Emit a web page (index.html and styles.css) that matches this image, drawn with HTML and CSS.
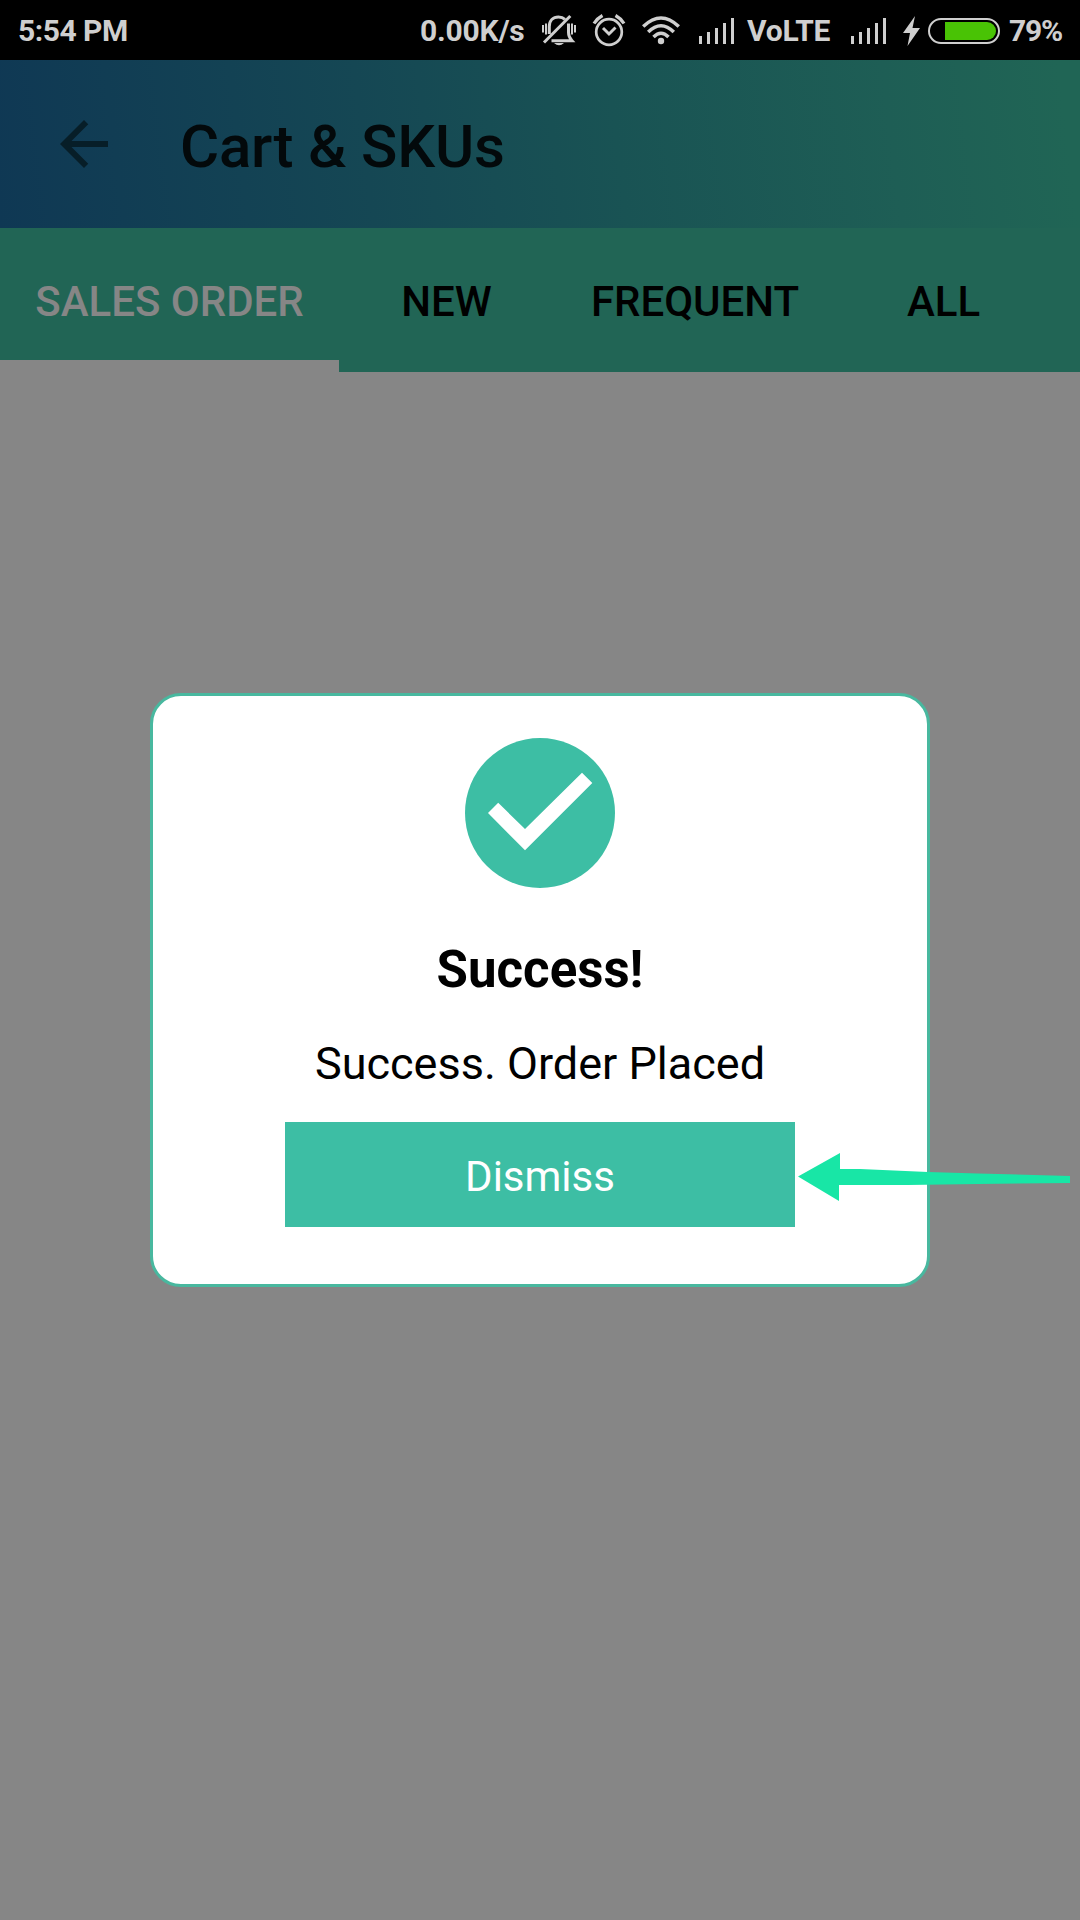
FILE: index.html
```
<!DOCTYPE html>
<html lang="en">
<head>
<meta charset="utf-8">
<title>Cart &amp; SKUs</title>
<link rel="stylesheet" href="styles.css">
</head>
<body>
<div class="screen">
  <div class="status">
    <span class="clock">5:54 PM</span>
    <span class="speed">0.00K/s</span>
    <svg class="bell" viewBox="0 0 36 36" width="36" height="36" fill="none" stroke="#cfcfcf">
      <path d="M8.300 21V13.500C8.300 7.500 12 4 17.500 4C20.300 4 22.300 4.800 24 6.300M27.500 10.500V19.500C27.500 23 28.500 25 31 27.700H10.500" stroke-width="3"/>
      <path d="M3 29.500L29.300 3" stroke-width="3"/>
      <path d="M2 12V19.500M5 10.500V21.500M31 10.500V21.500M34 12V19.500" stroke-width="2"/>
      <path d="M13 30H23Q18 34.500 13 30Z" fill="#cfcfcf" stroke="none"/>
    </svg>
    <svg class="alarm" viewBox="0 0 34 36" width="34" height="36" fill="none" stroke="#cfcfcf">
      <circle cx="17" cy="19" r="12.800" stroke-width="2.700"/>
      <path d="M11 15L17 21L23.500 14.500" stroke-width="2.900"/>
      <path d="M2 10.500Q5 5.500 10.500 2.500M23.500 2.500Q29 5.500 32 10.500" stroke-width="3.200"/>
    </svg>
    <svg class="wifi" viewBox="0 0 38 36" width="38" height="36" fill="none" stroke="#cfcfcf" stroke-width="3.500">
      <path d="M1.200 13.500Q19 -3.500 36.800 13.500M6.200 19Q19 6.500 31.800 19M11.500 24Q19 16.500 26.500 24"/>
      <circle cx="19" cy="28" r="3.200" fill="#cfcfcf" stroke="none"/>
    </svg>
    <svg class="signal" viewBox="0 0 36 26" width="36" height="26" fill="#cfcfcf">
      <path d="M0 18h3v8h-3zM8 14h3v12h-3zM16 10h3v16h-3zM24 5h3v21h-3zM32 0h3v26h-3z"/>
    </svg>
    <span class="volte">VoLTE</span>
    <svg class="signal" viewBox="0 0 36 26" width="36" height="26" fill="#cfcfcf">
      <path d="M0 18h3v8h-3zM8 14h3v12h-3zM16 10h3v16h-3zM24 5h3v21h-3zM32 0h3v26h-3z"/>
    </svg>
    <svg class="bolt" viewBox="0 0 17 30" width="17" height="30" fill="#cfcfcf"><path d="M12 0L0 17H7L4.500 30L17 12H9.500Z"/></svg>
    <svg class="battery" viewBox="0 0 72 26" width="72" height="26">
      <rect x="1" y="1" width="70" height="24" rx="12" fill="none" stroke="#cfcfcf" stroke-width="2"/>
      <path d="M17 4H59A9 9 0 0 1 59 22H17Z" fill="#49c305"/>
    </svg>
    <span class="percent">79%</span>
  </div>

  <header class="toolbar">
    <svg class="back" viewBox="0 0 24 24" width="72" height="72"><path d="M20 11H7.830l5.590-5.590L12 4l-8 8 8 8 1.410-1.410L7.830 13H20z"/></svg>
    <h1 class="title">Cart &amp; SKUs</h1>
  </header>

  <nav class="tabs">
    <span class="tab active">SALES ORDER</span>
    <span class="tab">NEW</span>
    <span class="tab wide">FREQUENT</span>
    <span class="tab">ALL</span>
  </nav>

  <main class="content">
    <section class="dialog">
      <svg class="check" viewBox="0 0 150 150" width="150" height="150">
        <circle cx="75" cy="75" r="75" fill="#3dbea4"/>
        <path d="M23 75L33.200 64.800L60 91L117 34.800L127.300 45L60 112.300Z" fill="#fff"/>
      </svg>
      <h2 class="heading">Success!</h2>
      <p class="message">Success. Order Placed</p>
      <button class="dismiss">Dismiss</button>
    </section>
  </main>

  <svg class="pointer" viewBox="0 0 274 50" width="274" height="50"><path d="M0 24.500L42 1V17L62 17L130 20L180 21.500L272 24V31L180 32L110 33H41V49Z" fill="#18e6a6"/></svg>
</div>
</body>
</html>
```
FILE: styles.css
```
* {
  box-sizing: border-box;
}

body {
  margin: 0;
  font-family: Roboto, "Liberation Sans", sans-serif;
}

.screen {
  position: relative;
  display: flex;
  flex-direction: column;
  width: 1080px;
  height: 1920px;
  overflow: hidden;
  background: #868686;
}

.status {
  display: grid;
  grid-template-columns: 402px 121px 51px 50px 57px 48px 104px 52px 25px 81px 72px;
  align-items: center;
  height: 60px;
  padding-left: 18px;
  background: #000;
  color: #cfcfcf;
  font-size: 30px;
  font-weight: 700;
  line-height: 62px;
  letter-spacing: -0.2px;
  white-space: nowrap;
}

.clock {
  letter-spacing: -0.5px;
}

.percent {
  letter-spacing: -1.2px;
}

.status svg {
  display: block;
}

.bell,
.alarm,
.wifi {
  margin-top: -1px;
}

.toolbar {
  display: flex;
  align-items: center;
  gap: 60px;
  height: 168px;
  padding-left: 48px;
  background: linear-gradient(83deg, #0f3854 0%, #154754 34%, #195354 57%, #1e5e55 82%, #206555 98%);
}

.back {
  fill: #071e28;
}

.title {
  margin: 5px 0 0;
  color: #03090b;
  font-size: 60px;
  font-weight: 500;
  letter-spacing: -0.2px;
}

.tabs {
  display: flex;
  height: 144px;
  background: #216555;
  color: #000;
  font-size: 42px;
  font-weight: 500;
}

.tab {
  display: flex;
  align-items: center;
  justify-content: center;
  width: 215px;
  padding-top: 3px;
  white-space: nowrap;
}

.tab.wide {
  width: 282px;
}

.tab.active {
  width: 339px;
  padding-top: 15px;
  border-bottom: 12px solid #868686;
  color: #868686;
}

.content {
  display: flex;
  justify-content: center;
  padding-top: 321px;
}

.dialog {
  display: flex;
  flex-direction: column;
  align-items: center;
  width: 780px;
  height: 594px;
  padding-top: 42px;
  border: 3px solid #48b89f;
  border-radius: 31px;
  background: #fff;
  color: #000;
}

.heading {
  margin: 52px 0 0;
  font-size: 51px;
  line-height: 60px;
  font-weight: 700;
}

.message {
  margin: 34px 0 0;
  font-size: 45px;
  line-height: 60px;
}

.dismiss {
  width: 510px;
  height: 105px;
  margin-top: 28px;
  padding: 3px 0 0;
  border: 0;
  background: #3dbea4;
  color: #fff;
  font: 400 42px Roboto, "Liberation Sans", sans-serif;
}

/* Callout arrow laid over the dialog edge */
.pointer {
  position: absolute;
  left: 798px;
  top: 1152px;
}
```
